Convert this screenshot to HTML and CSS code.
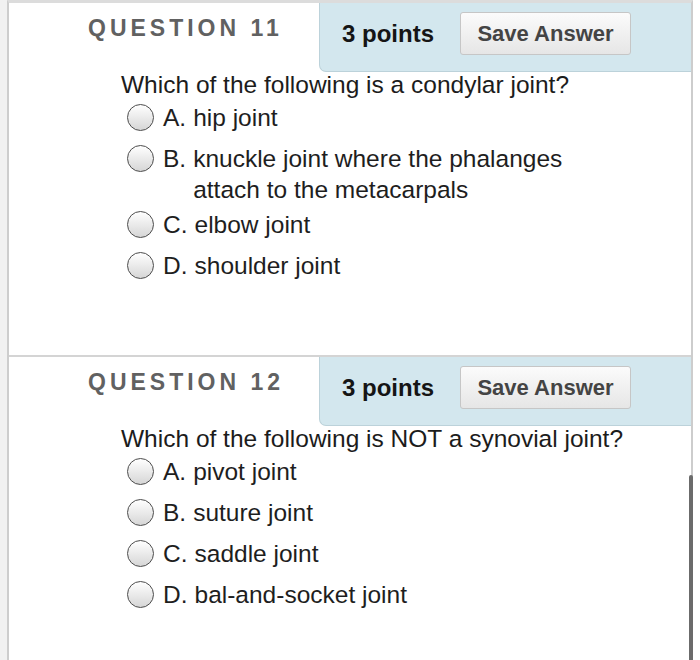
FILE: index.html
```html
<html lang="en">
	<head>
	<title>Test Questions</title>
	<link rel="stylesheet" href="styles.css">
	</head>
	<body>
<div class="sheet">

	<!-- Question 11 -->
	<section class="question">
		<div class="q-head">
			<h2 class="q-title">QUESTION 11</h2>
			<div class="q-points">
				<span class="pts">3 points</span>
				<button class="save">Save Answer</button>
			</div>
		</div>
		<div class="q-body">
			<p class="q-text">Which of the following is a condylar joint?</p>
			<ul class="choices">
				<li class="choice"><span class="radio"></span><span class="letter">A.</span><span class="answer">hip joint</span></li>
				<li class="choice"><span class="radio"></span><span class="letter">B.</span><span class="answer">knuckle joint where the phalanges attach to the metacarpals</span></li>
				<li class="choice"><span class="radio"></span><span class="letter">C.</span><span class="answer">elbow joint</span></li>
				<li class="choice"><span class="radio"></span><span class="letter">D.</span><span class="answer">shoulder joint</span></li>
			</ul>
		</div>
	</section>

	<!-- Question 12 -->
	<section class="question">
		<div class="q-head">
			<h2 class="q-title">QUESTION 12</h2>
			<div class="q-points">
				<span class="pts">3 points</span>
				<button class="save">Save Answer</button>
			</div>
		</div>
		<div class="q-body">
			<p class="q-text">Which of the following is NOT a synovial joint?</p>
			<ul class="choices">
				<li class="choice"><span class="radio"></span><span class="letter">A.</span><span class="answer">pivot joint</span></li>
				<li class="choice"><span class="radio"></span><span class="letter">B.</span><span class="answer">suture joint</span></li>
				<li class="choice"><span class="radio"></span><span class="letter">C.</span><span class="answer">saddle joint</span></li>
				<li class="choice"><span class="radio"></span><span class="letter">D.</span><span class="answer">bal-and-socket joint</span></li>
			</ul>
		</div>
	</section>

</div>

<!-- scroll indicator -->
<div class="scrollbar"></div>
	</body>
</html>
```

FILE: styles.css
```css
html, body { margin:0; padding:0; height:100%; overflow:hidden; }
body { background:#ffffff; font-family:"Liberation Sans", Arial, sans-serif; color:#1e1e1e; position:relative; }

.sheet { margin-left:7px; width:682px; min-height:657px; border-left:2px solid #cdcdcd; border-right:2px solid #cdcdcd; border-top:3px solid #dcdcdc; background:#ffffff; box-shadow:-7px 0 0 #f1f1f1; }

.question { border-bottom:2px solid #d4d4d4; padding-bottom:68px; }
.question:last-child { border-bottom:none; padding-bottom:0; }

.q-head { display:flex; height:69px; }
.q-title { width:231px; margin:0; padding:15px 0 0 79px; font-size:23px; font-weight:bold; letter-spacing:4px; color:#616161; line-height:20px; }
.q-points { flex:1; display:flex; align-items:flex-start; padding:9px 0 0 22px; background:#d3e7ee; border-left:1px solid #bcd2da; border-bottom:1px solid #bcd2da; border-bottom-left-radius:7px; }
.pts { font-size:24px; font-weight:bold; color:#151515; line-height:43px; margin-right:26px; }
.save { width:171px; height:43px; padding:0; font-family:"Liberation Sans", Arial, sans-serif; font-size:22px; font-weight:bold; color:#444444; background:linear-gradient(#fbfbfb, #e6e6e6); border:1px solid #c6c6c6; border-radius:3px; }

.q-body { padding-left:112px; width:560px; }
.q-text { margin:0; font-size:24.5px; line-height:26px; color:#1c1c1c; }

.choices { list-style:none; margin:0; padding:0; width:480px; }
.choice { display:flex; align-items:flex-start; padding-left:6px; min-height:41px; font-size:24.5px; }
.radio { flex:none; width:25px; height:25px; margin:6px 9px 0 0; border:1.5px solid #4c4c4c; border-radius:50%; background:linear-gradient(#ffffff, #d6d6d6); }
.letter { line-height:31px; padding-top:4px; margin-right:7px; }
.answer { flex:1; line-height:31px; padding-top:4px; }

.scrollbar { position:absolute; left:689px; top:475px; width:4px; height:200px; background:#6b6b6b; border-radius:2px; }
```
